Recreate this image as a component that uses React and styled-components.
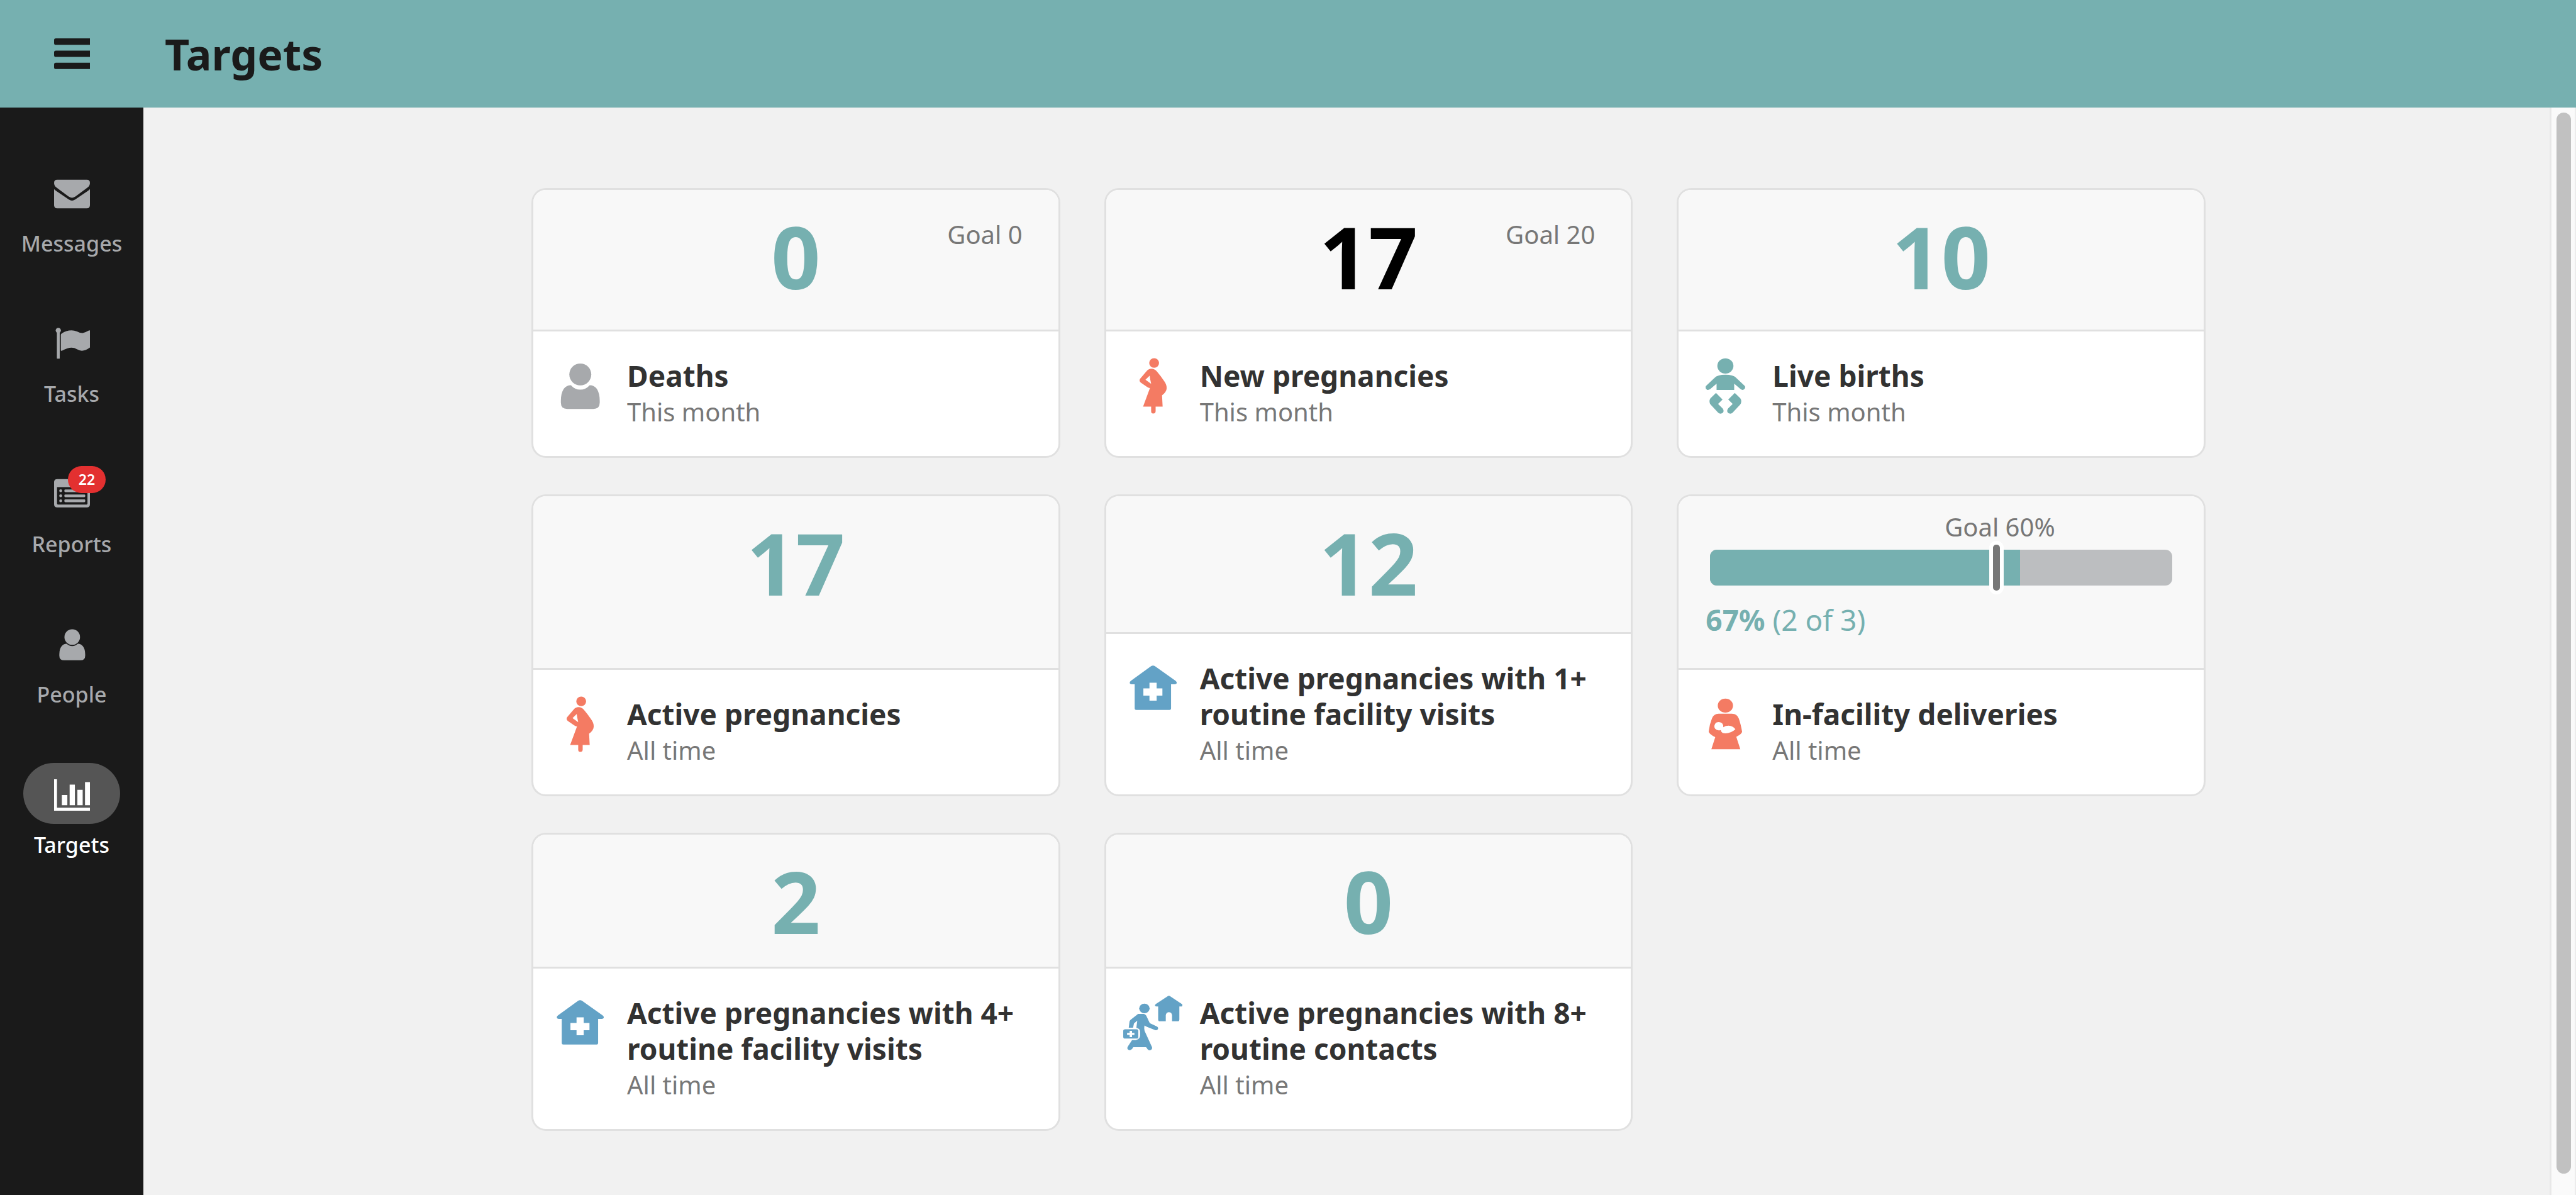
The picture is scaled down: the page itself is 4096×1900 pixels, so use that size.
import React from "react";
import styled, { createGlobalStyle } from "styled-components";

const colors = {
  teal: "#76b0b0",
  black: "#1a1a1a",
  page: "#f1f1f1",
  line: "#e0e0e0",
  gray: "#a7a9ac",
  text: "#323232",
  muted: "#777777",
  coral: "#f47b63",
  blue: "#63a2c6",
};

const GlobalStyle = createGlobalStyle`
  *, *::before, *::after { box-sizing: border-box; }
  body {
    margin: 0;
    background: ${colors.page};
    color: ${colors.text};
    font-family: "Noto Sans", sans-serif;
    font-size: 40px;
    line-height: 57px;
  }
`;

const Page = styled.div`
  display: flex;
  flex-direction: column;
  height: 100vh;
`;

const TopBar = styled.header`
  display: flex;
  flex: none;
  align-items: center;
  height: 171px;
  background: ${colors.teal};
`;

const MenuButton = styled.button`
  display: flex;
  align-items: center;
  justify-content: center;
  width: 228px;
  height: 100%;
  padding: 0;
  border: 0;
  background: none;
  color: ${colors.black};
  cursor: pointer;
`;

const PageTitle = styled.h1`
  margin: 0;
  padding-left: 34px;
  color: ${colors.black};
  font-size: 68px;
  font-weight: 700;
  line-height: 96px;
`;

const Body = styled.div`
  display: flex;
  flex: 1;
  min-height: 0;
`;

const SideNav = styled.nav`
  display: flex;
  flex: none;
  flex-direction: column;
  align-items: center;
  gap: 85px;
  width: 228px;
  padding-top: 86px;
  background: ${colors.black};
`;

const NavLink = styled.a`
  display: flex;
  flex-direction: column;
  align-items: center;
  gap: 9px;
  color: ${(p) => (p.$active ? "#ffffff" : colors.gray)};
  font-size: 34px;
  font-weight: 500;
  line-height: 48px;
  text-decoration: none;
`;

const NavPill = styled.span`
  position: relative;
  display: flex;
  align-items: center;
  justify-content: center;
  width: 154px;
  height: 97px;
  border-radius: 49px;
  background: ${(p) => (p.$active ? "#555555" : "transparent")};
`;

const Badge = styled.span`
  position: absolute;
  top: 6px;
  left: 71px;
  width: 60px;
  height: 43px;
  border-radius: 22px;
  background: #e33030;
  color: #ffffff;
  font-size: 23px;
  font-weight: 600;
  line-height: 43px;
  text-align: center;
`;

const NavSvg = styled.svg`
  display: block;
  width: 57px;
  height: 57px;
  fill: currentColor;
`;

const Content = styled.main`
  flex: 1;
  min-width: 0;
  padding-top: 128px;
  overflow: hidden;
`;

const TargetGrid = styled.div`
  display: grid;
  grid-template-columns: repeat(3, 1fr);
  gap: 58px 70px;
  max-width: 2732px;
  margin: 0 auto;
  padding-left: 70px;
`;

const Card = styled.section`
  display: flex;
  flex-direction: column;
  overflow: hidden;
  border: 3px solid ${colors.line};
  border-radius: 23px;
  background: #ffffff;
`;

const CountPanel = styled.div`
  display: grid;
  flex: 1;
  grid-template-columns: 1fr auto 1fr;
  align-items: start;
  padding: 28px 57px ${(p) => (p.$goal ? 40 : 28)}px;
  background: #f8f8f8;
`;

const Count = styled.strong`
  grid-column: 2;
  color: ${(p) => (p.$below ? "#000000" : colors.teal)};
  font-size: 137px;
  font-weight: 700;
  line-height: 154px;
`;

const CountGoal = styled.span`
  grid-column: 3;
  padding-top: 14px;
  color: ${colors.muted};
  text-align: right;
`;

const PercentPanel = styled.div`
  flex: 1;
  padding: 20px 43px 48px;
  background: #f8f8f8;
`;

const Meter = styled.div`
  margin: 0 7px;
`;

const MeterGoal = styled.div`
  width: max-content;
  margin-left: ${(p) => p.$at}%;
  color: ${colors.muted};
  transform: translateX(-68px);
`;

const Track = styled.div`
  position: relative;
  height: 57px;
  margin-top: 8px;
  border-radius: 11px;
  background: #bcbec0;
`;

const Fill = styled.div`
  width: ${(p) => p.$value}%;
  height: 100%;
  border-radius: 11px 0 0 11px;
  background: ${colors.teal};
`;

const GoalMarker = styled.span`
  position: absolute;
  top: -14px;
  bottom: -14px;
  left: ${(p) => p.$at}%;
  width: 23px;
  margin-left: 3px;
  border: 6px solid #ffffff;
  border-radius: 11px;
  background: ${colors.muted};
`;

const PercentText = styled.p`
  margin: 26px 0 0;
  color: ${colors.teal};
  font-size: 46px;
`;

const Caption = styled.div`
  display: flex;
  align-items: flex-start;
  gap: 28px;
  padding: 42px 28px 42px 27px;
  border-top: 3px solid ${colors.line};
`;

const TargetSvg = styled.svg`
  display: block;
  flex: none;
  width: 94px;
  height: 94px;
  fill: ${(p) => p.$color};
`;

const TargetTitle = styled.h2`
  margin: 0;
  font-size: 46px;
  font-weight: 700;
  line-height: 57px;
`;

const Period = styled.p`
  margin: 0;
  color: ${colors.muted};
`;

const ScrollTrack = styled.div`
  flex: none;
  width: 42px;
  padding: 8px 6px 34px 7px;
  border-right: 2px solid #ececec;
  border-left: 3px solid #e8e8e8;
  background: #fafafa;
`;

const ScrollThumb = styled.div`
  height: 100%;
  width: 23px;
  margin: 0 auto;
  border-radius: 12px;
  background: #c1c1c1;
`;

const MenuIcon = () => (
  <NavSvg viewBox="0 0 80 80" aria-hidden="true">
    <path d="M4 5.500H80V20H4Q0 20 0 16V9.500Q0 5.500 4 5.500Z" />
    <path d="M4 33H80V47H4Q0 47 0 43V37Q0 33 4 33Z" />
    <path d="M4 60H80V74H4Q0 74 0 70V64Q0 60 4 60Z" />
  </NavSvg>
);

const EnvelopeIcon = () => (
  <NavSvg viewBox="0 0 80 80" aria-hidden="true">
    <path d="M7 12.400H73Q80 12.400 80 19.500Q80 26 74 30L48 49.500Q40 55.500 32 49.500L6 30Q0 26 0 19.500Q0 12.400 7 12.400Z" />
    <path d="M0 33.400Q2 35.500 5 37.500L33 56.500Q40 61.500 47 56.500L75 37.500Q78 35.500 80 33.400V69Q80 76 73 76H7Q0 76 0 69Z" />
  </NavSvg>
);

const FlagIcon = () => (
  <NavSvg viewBox="0 0 80 80" aria-hidden="true">
    <circle cx="9.400" cy="13.200" r="5.800" />
    <path d="M6.200 15H12.600V75Q12.600 76.300 11.300 76.300H7.500Q6.200 76.300 6.200 75Z" />
    <path d="M15 23Q15 21.500 17 20Q27 13 39 13Q45 13 51 15.500Q59 19.500 64 19Q69 18 76 14Q80.500 11.500 80.500 15V49Q80.500 51 79 52Q70 58.500 62 58.500Q57 58.500 51 55Q45 51.500 39 51.500Q30 51.500 18 58.200Q15 59.500 15 57Z" />
  </NavSvg>
);

const ListIcon = () => (
  <NavSvg viewBox="0 0 80 80" aria-hidden="true">
    <path
      fillRule="evenodd"
      d="M7 9.400H73Q80 9.400 80 16.400V65.600Q80 72.600 73 72.600H7Q0 72.600 0 65.600V16.400Q0 9.400 7 9.400ZM6.600 27.300V64.200Q6.600 66.200 8.600 66.200H72.500Q74.500 66.200 74.500 64.200V27.300Z"
    />
    {[35.5, 46.7, 57.9].map((y) => (
      <g key={y}>
        <circle cx="14.800" cy={y} r="3.200" />
        <rect x="23" y={y - 3} width="46.500" height="6" rx="2" />
      </g>
    ))}
  </NavSvg>
);

const PersonIcon = () => (
  <NavSvg viewBox="0 0 80 80" aria-hidden="true">
    <circle cx="40.500" cy="26.500" r="17.400" />
    <path d="M28 41.300Q33 46.500 40.500 46.500Q48 46.500 53 41.300Q60 41.500 64 46.500Q69.400 53 69.400 65V68Q69.400 78.400 59 78.400H22Q11.700 78.400 11.700 68V65Q11.700 53 17 46.500Q21 41.500 28 41.300Z" />
  </NavSvg>
);

const ChartIcon = () => (
  <NavSvg viewBox="0 0 80 80" aria-hidden="true">
    <path d="M0 8.400H6.500V72H80V78.500H0Z" />
    <path d="M17.300 43.500H29.600V66.400H17.300ZM34.700 20.500H46.400V66.400H34.700ZM52 32H63.800V66.400H52ZM69 14.800H80V66.400H69Z" />
  </NavSvg>
);

const DeathIcon = () => (
  <TargetSvg viewBox="0 0 132 132" $color={colors.gray} aria-hidden="true">
    <circle cx="67" cy="37" r="24.500" />
    <path d="M46 61Q55 71 67 71Q79 71 88 61Q98 61 104 69Q110.400 79 110.400 96V100Q110.400 114 96 114H38Q23.600 114 23.600 100V96Q23.600 79 30 69Q36 61 46 61Z" />
  </TargetSvg>
);

const PregnantIcon = () => (
  <TargetSvg viewBox="30 45 396 396" $color={colors.coral} aria-hidden="true">
    <ellipse cx="237" cy="79" rx="33" ry="32" />
    <path
      fillRule="evenodd"
      d="M219 118Q241 118 256 137Q280 165 303 199Q321 222 321 247Q321 272 290 296L294 371H247V403Q246 418 231 418Q217 418 217 403V371H163L209 247Q199 247 190 240L147 210Q134 199 143 185L187 133Q200 118 219 118ZM207 164L179 191L217 219Q210 188 207 164Z"
    />
  </TargetSvg>
);

const BabyIcon = () => (
  <TargetSvg viewBox="27 45 396 396" $color={colors.teal} aria-hidden="true">
    <ellipse cx="227" cy="99" rx="54" ry="51" />
    <path d="M168 260V218L126 254Q115 262 104 259Q93 252 94 240Q95 234 101 229L157 177Q175 158 227 158Q279 158 297 177L353 229Q359 234 360 240Q360 252 349 258Q339 262 328 254L286 218V260Z" />
    <path d="M164 280L208 324L178 354L208 383Q218 394 214 407Q206 421 189 418Q183 416 178 411L127 357Q114 337 127 316Z" />
    <path d="M290 280L246 324L276 354L246 383Q236 394 240 407Q248 421 265 418Q271 416 276 411L327 357Q340 337 327 316Z" />
  </TargetSvg>
);

const MotherIcon = () => (
  <TargetSvg viewBox="27 33 396 396" $color={colors.coral} aria-hidden="true">
    <ellipse cx="227" cy="96" rx="51" ry="47" />
    <path
      fillRule="evenodd"
      d="M182 150H270Q306 151 317 183Q330 220 339 271Q337 285 300 305L327 388H133L159 307Q118 287 115 270Q120 222 137 181Q149 151 182 150ZM183 206Q165 206 157 220Q149 236 158 250Q171 266 196 259Q199 278 219 281Q262 284 294 254Q280 232 248 230Q229 230 213 240Q214 208 183 206Z"
    />
  </TargetSvg>
);

const FacilityIcon = () => (
  <TargetSvg viewBox="0 0 132 132" $color={colors.blue} aria-hidden="true">
    <path
      fillRule="evenodd"
      d="M62 13Q66.500 10.500 71 13L117 45.500Q120 48 119.500 51Q118.500 53.500 115 53.500H106.800V107.500Q106.800 110.700 103.500 110.700H29Q25.600 110.700 25.600 107.500V53.500H19Q15.500 53.500 14.500 51Q14 48 17 45.500ZM58.600 50V62.500H45V78.500H58.600V90H74.600V78.500H87.500V62.500H74.600V50Z"
    />
  </TargetSvg>
);

const HomeVisitIcon = () => (
  <TargetSvg viewBox="30 29 396 396" $color={colors.blue} aria-hidden="true">
    <path d="M326 38Q336 31 346 38L422 89Q430 95 427 101Q424 106 416 106H406V193Q406 205 394 205H357V165Q355 145 336 144Q317 146 315 165V205H276Q264 205 264 193V106H254Q245 106 243 101Q241 95 249 89Z" />
    <ellipse cx="172" cy="119" rx="35" ry="32" />
    <path d="M130 155H168Q178 157 184 167L208 218L255 240Q266 246 263 257Q258 268 243 264L190 243L172 233Q169 250 173 269L223 379Q226 395 211 399Q200 401 192 391Q188 382 182 379H97Q90 395 78 398Q66 400 59 391Q55 382 62 372L89 331H113Q142 327 143 301V274Q142 253 118 249L124 201L102 220L96 248H67L72 208Q73 201 79 195Z" />
    <path
      fillRule="evenodd"
      d="M43 259H120Q131 259 131 270V309Q131 321 120 321H43Q30 321 30 309V270Q30 259 43 259ZM73 269V283H56V297H73V311H89V297H105V283H89V269Z"
    />
  </TargetSvg>
);

const navItems = [
  { label: "Messages", Icon: EnvelopeIcon },
  { label: "Tasks", Icon: FlagIcon },
  { label: "Reports", Icon: ListIcon, badge: 22 },
  { label: "People", Icon: PersonIcon },
  { label: "Targets", Icon: ChartIcon, active: true },
];

const targets = [
  { title: "Deaths", period: "This month", count: 0, goal: 0, Icon: DeathIcon },
  { title: "New pregnancies", period: "This month", count: 17, goal: 20, Icon: PregnantIcon },
  { title: "Live births", period: "This month", count: 10, Icon: BabyIcon },
  { title: "Active pregnancies", period: "All time", count: 17, Icon: PregnantIcon },
  { title: "Active pregnancies with 1+ routine facility visits", period: "All time", count: 12, Icon: FacilityIcon },
  { title: "In-facility deliveries", period: "All time", percent: 67, detail: "(2 of 3)", goal: 60, Icon: MotherIcon },
  { title: "Active pregnancies with 4+ routine facility visits", period: "All time", count: 2, Icon: FacilityIcon },
  { title: "Active pregnancies with 8+ routine contacts", period: "All time", count: 0, Icon: HomeVisitIcon },
];

function CountTarget({ count, goal }) {
  const hasGoal = goal !== undefined;
  return (
    <CountPanel $goal={hasGoal}>
      <Count $below={hasGoal && count < goal}>{count}</Count>
      {hasGoal && <CountGoal>Goal {goal}</CountGoal>}
    </CountPanel>
  );
}

function PercentTarget({ title, percent, detail, goal }) {
  return (
    <PercentPanel>
      <Meter>
        <MeterGoal $at={goal}>Goal {goal}%</MeterGoal>
        <Track role="progressbar" aria-label={title} aria-valuenow={percent} aria-valuemin={0} aria-valuemax={100}>
          <Fill $value={percent} />
          <GoalMarker $at={goal} />
        </Track>
      </Meter>
      <PercentText>
        <strong>{percent}%</strong> {detail}
      </PercentText>
    </PercentPanel>
  );
}

export default function App() {
  return (
    <>
      <GlobalStyle />
      <Page>
        <TopBar>
          <MenuButton type="button" aria-label="Menu">
            <MenuIcon />
          </MenuButton>
          <PageTitle>Targets</PageTitle>
        </TopBar>
        <Body>
          <SideNav>
            {navItems.map(({ label, Icon, badge, active }) => (
              <NavLink key={label} href={`#${label.toLowerCase()}`} $active={active} aria-current={active ? "page" : undefined}>
                <NavPill $active={active}>
                  <Icon />
                  {badge && <Badge>{badge}</Badge>}
                </NavPill>
                {label}
              </NavLink>
            ))}
          </SideNav>
          <Content>
            <TargetGrid>
              {targets.map(({ Icon, ...target }) => (
                <Card key={target.title}>
                  {target.percent === undefined ? <CountTarget {...target} /> : <PercentTarget {...target} />}
                  <Caption>
                    <Icon />
                    <div>
                      <TargetTitle>{target.title}</TargetTitle>
                      <Period>{target.period}</Period>
                    </div>
                  </Caption>
                </Card>
              ))}
            </TargetGrid>
          </Content>
          <ScrollTrack aria-hidden="true">
            <ScrollThumb />
          </ScrollTrack>
        </Body>
      </Page>
    </>
  );
}
